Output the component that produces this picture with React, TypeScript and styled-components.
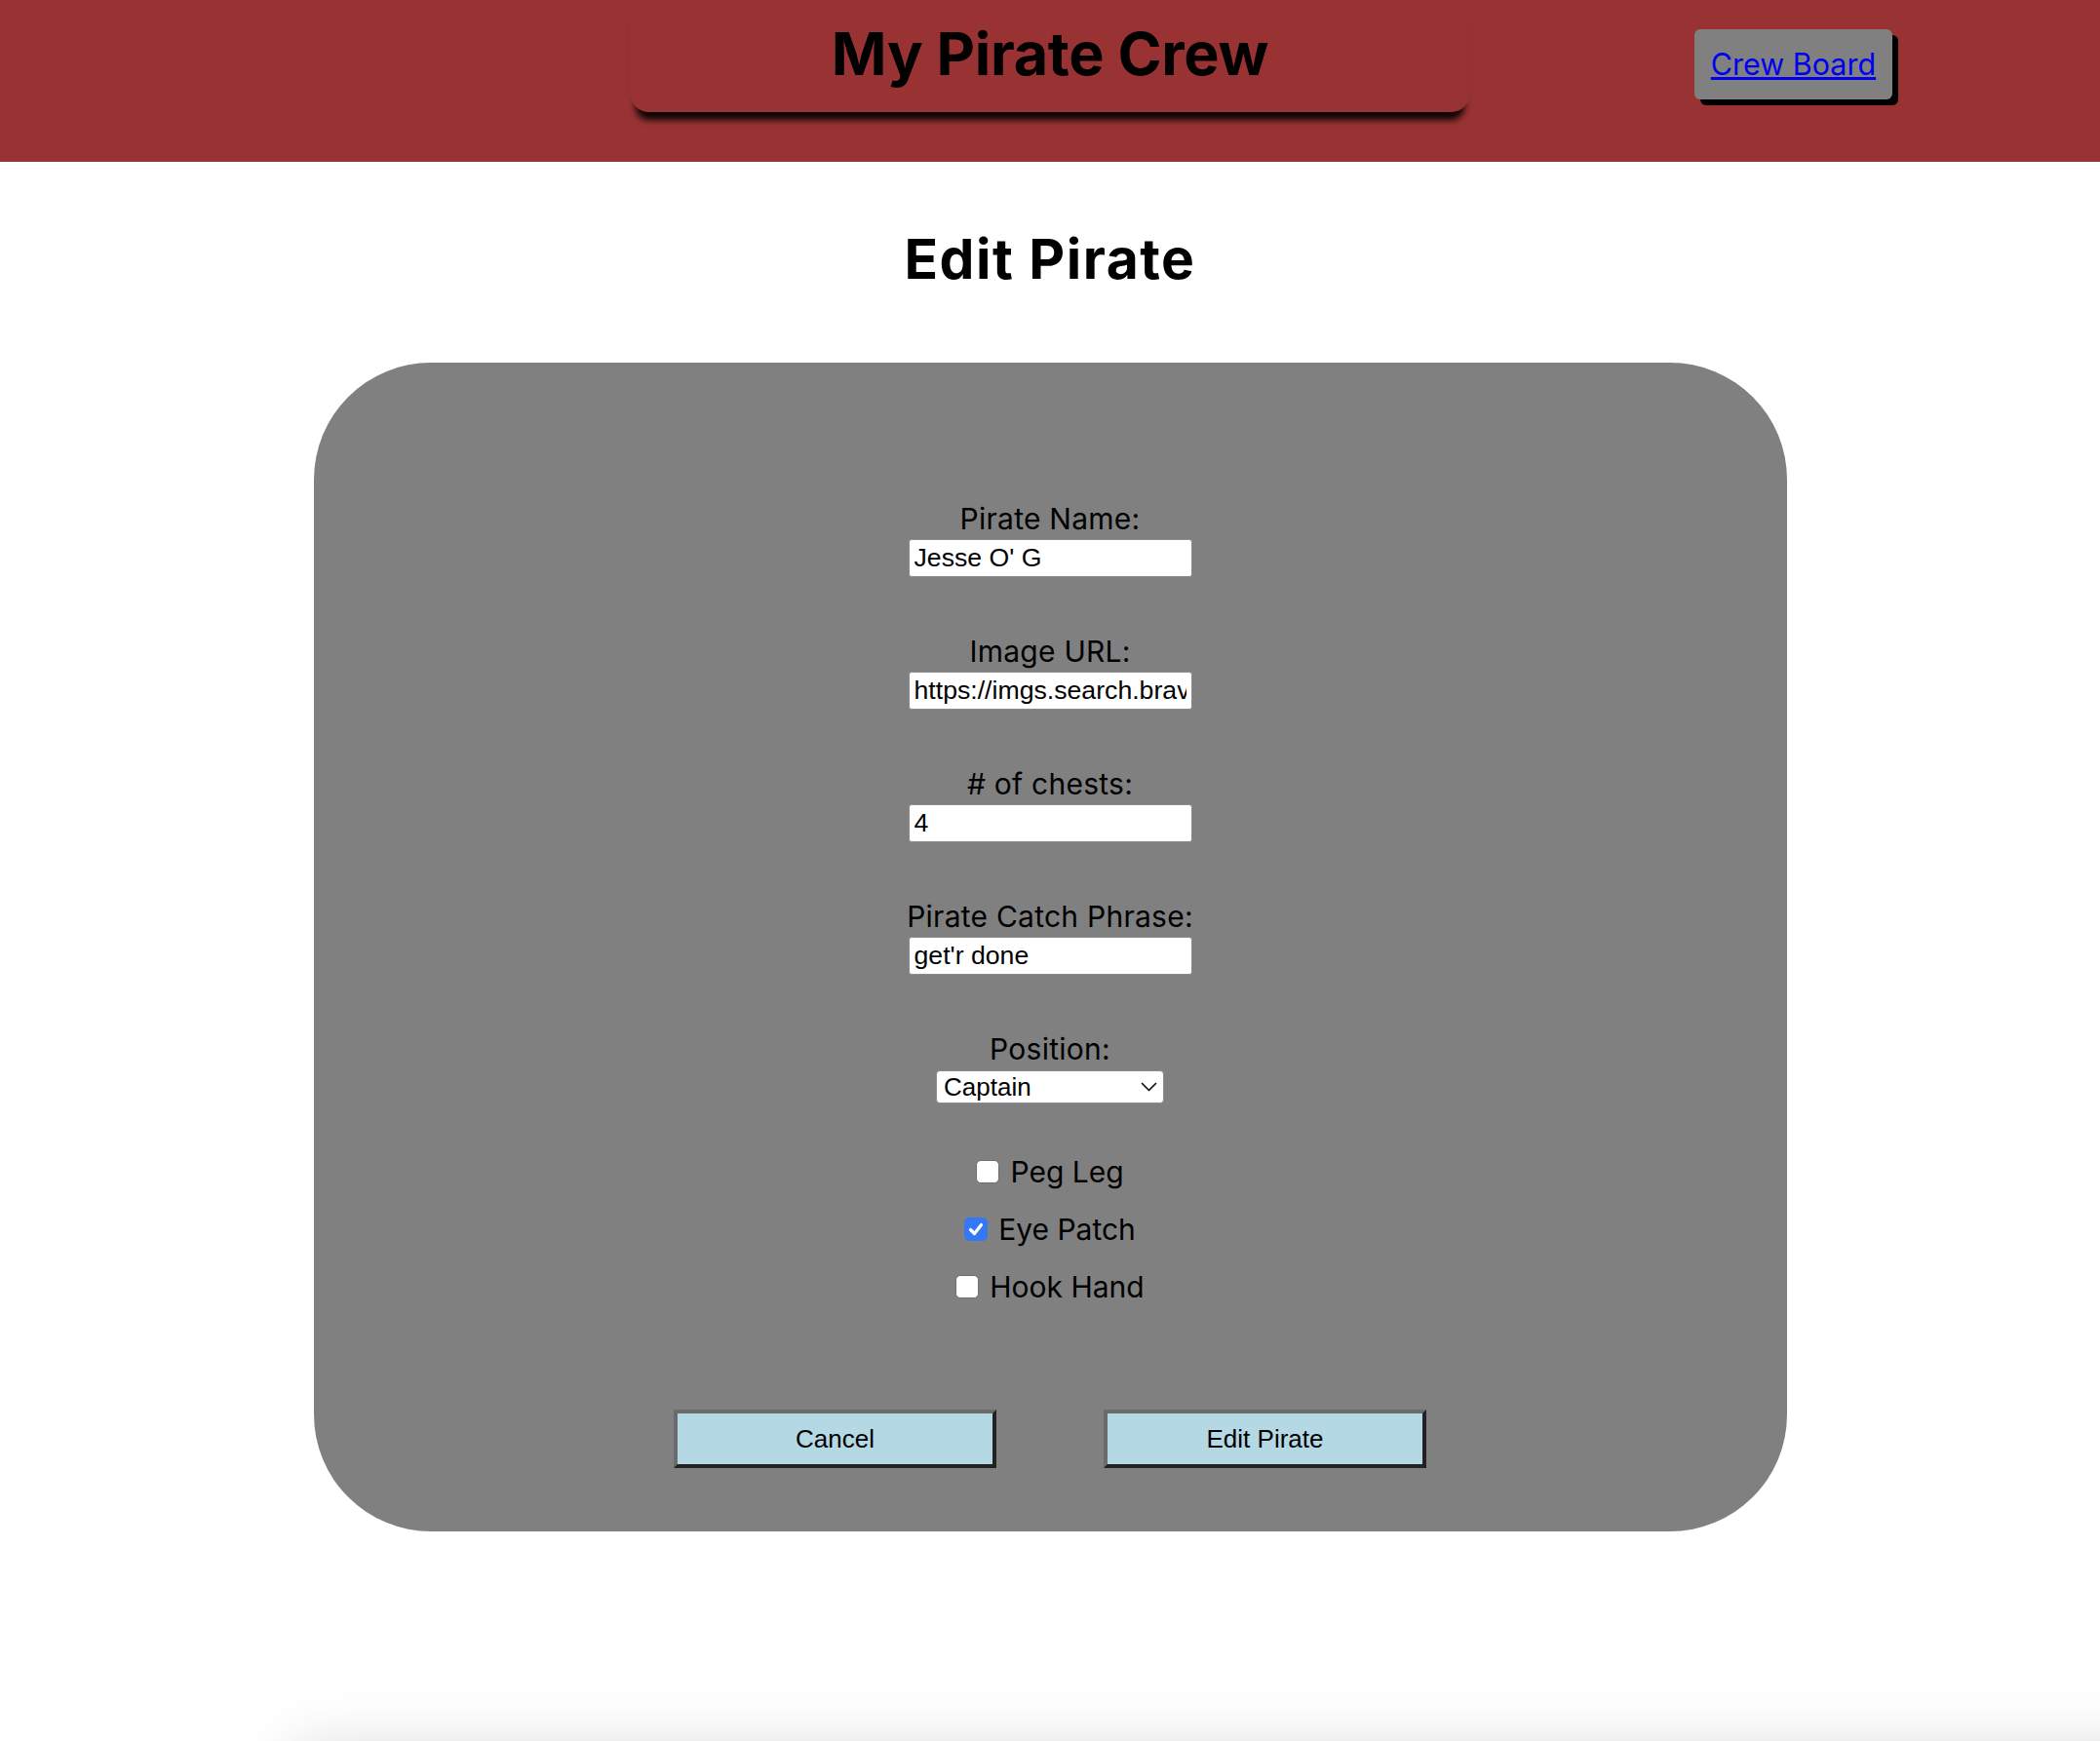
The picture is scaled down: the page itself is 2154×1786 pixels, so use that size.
import React from "react";
import styled, { createGlobalStyle } from "styled-components";

const GlobalStyle = createGlobalStyle`
  html, body {
    margin: 0;
    padding: 0;
    overflow: hidden;
    background: #ffffff;
    font-family: Inter, "Noto Sans", sans-serif;
  }
`;

const Header = styled.header`
  height: 166px;
  background: #993333;
  display: grid;
  grid-template-columns: 1fr 40% 1fr;
  align-items: start;
`;

const TitleBox = styled.div`
  grid-column: 2;
  background: #993333;
  border-radius: 0 0 20px 20px;
  box-shadow: 0 14px 7px -6px rgba(0, 0, 0, 0.95);
  padding: 18px 0 22px;
  text-align: center;
`;

const Title = styled.h1`
  margin: 0;
  font-family: Inter, sans-serif;
  font-weight: 700;
  font-size: 61px;
  line-height: 75px;
  letter-spacing: -0.3px;
  color: #000;
`;

const NavCell = styled.div`
  grid-column: 3;
  padding: 30px 0 0 230px;
`;

const NavButton = styled.div`
  display: inline-block;
  background: #808080;
  border-radius: 6px;
  box-shadow: 6px 6px 0 #000;
  padding: 16px 17px;
  font-size: 30.5px;
  line-height: 40px;
`;

const NavLink = styled.a`
  color: #0000ee;
  text-decoration: underline;
`;

const Main = styled.main`
  display: flex;
  flex-direction: column;
  align-items: center;
`;

const PageTitle = styled.h2`
  margin: 68px 0 75px;
  font-weight: 700;
  font-size: 57px;
  line-height: 63px;
  letter-spacing: 1.5px;
  color: #000;
`;

const Card = styled.form`
  width: 1511px;
  box-sizing: border-box;
  background: #808080;
  border-radius: 120px;
  padding: 143px 0 65px;
  display: flex;
  flex-direction: column;
  align-items: center;
`;

const Fields = styled.div`
  display: flex;
  flex-direction: column;
  align-items: center;
  gap: 59px;
`;

const Field = styled.div<{ $gap?: number }>`
  display: flex;
  flex-direction: column;
  align-items: center;
  gap: ${(p) => p.$gap ?? 4}px;
`;

const Label = styled.label`
  font-size: 30px;
  line-height: 34px;
  letter-spacing: 0.25px;
  color: #000;
`;

const TextInput = styled.input`
  width: 291px;
  height: 39px;
  box-sizing: border-box;
  margin: 0;
  padding: 0 5px;
  border: 1px solid #8c8c8c;
  border-radius: 3px;
  background: #fff;
  font-family: "Liberation Sans", Arial, sans-serif;
  font-size: 26.67px;
  color: #000;
  outline: none;
`;

const SelectWrap = styled.div`
  position: relative;
  width: 234px;
  height: 34px;
`;

const Select = styled.select`
  appearance: none;
  width: 100%;
  height: 100%;
  box-sizing: border-box;
  margin: 0;
  padding: 0 30px 0 7px;
  border: 1px solid #8c8c8c;
  border-radius: 4px;
  background: #fff;
  font-family: "Liberation Sans", Arial, sans-serif;
  font-size: 26px;
  color: #000;
  outline: none;
`;

const Chevron = styled.svg`
  position: absolute;
  right: 7px;
  top: 50%;
  transform: translateY(-50%);
  pointer-events: none;
`;

const CheckGroup = styled.div`
  margin-top: 52px;
  display: flex;
  flex-direction: column;
  align-items: center;
  gap: 23px;
`;

const CheckRow = styled.label`
  display: flex;
  align-items: center;
  gap: 11px;
  font-size: 30px;
  line-height: 36px;
  color: #000;
`;

const BoxWrap = styled.span`
  position: relative;
  display: inline-flex;
  width: 24px;
  height: 24px;
`;

const Checkbox = styled.input`
  appearance: none;
  width: 24px;
  height: 24px;
  margin: 0;
  box-sizing: border-box;
  border: 1.5px solid #6f6f6f;
  border-radius: 5px;
  background: #fff;

  &:checked {
    background: #3478f6;
    border-color: #3478f6;
  }
`;

const CheckMark = styled.svg`
  position: absolute;
  left: 3px;
  top: 3px;
  pointer-events: none;
`;

const ButtonRow = styled.div`
  margin-top: 108px;
  display: flex;
  gap: 110px;
`;

const ActionButton = styled.button`
  width: 331px;
  height: 60px;
  box-sizing: border-box;
  background: #b4d8e4;
  border-width: 4px;
  border-style: solid;
  border-color: #6b6b6b #222 #222 #6b6b6b;
  font-family: "Liberation Sans", Arial, sans-serif;
  font-size: 26px;
  color: #000;
  cursor: pointer;
`;

const FooterShade = styled.div`
  margin: 223px -300px 0 300px;
  height: 200px;
  background: #fff;
  box-shadow: 0 0 60px rgba(0, 0, 0, 0.15);
`;

function Check({ label, checked }: { label: string; checked?: boolean }) {
  return (
    <CheckRow>
      <BoxWrap>
        <Checkbox type="checkbox" defaultChecked={checked} />
        {checked && (
          <CheckMark width="18" height="18" viewBox="0 0 18 18" fill="none">
            <path
              d="M3.5 9.5 L7.5 13.5 L14.5 4.5"
              stroke="#fff"
              strokeWidth="3.2"
              strokeLinecap="round"
              strokeLinejoin="round"
            />
          </CheckMark>
        )}
      </BoxWrap>
      {label}
    </CheckRow>
  );
}

export default function App() {
  return (
    <>
      <GlobalStyle />
      <Header>
        <TitleBox>
          <Title>My Pirate Crew</Title>
        </TitleBox>
        <NavCell>
          <NavButton>
            <NavLink href="#">Crew Board</NavLink>
          </NavButton>
        </NavCell>
      </Header>
      <Main>
        <PageTitle>Edit Pirate</PageTitle>
        <Card onSubmit={(e) => e.preventDefault()}>
          <Fields>
            <Field>
              <Label htmlFor="name">Pirate Name:</Label>
              <TextInput id="name" type="text" defaultValue="Jesse O' G" />
            </Field>
            <Field>
              <Label htmlFor="img">Image URL:</Label>
              <TextInput
                id="img"
                type="text"
                defaultValue="https://imgs.search.brave.com/pirate.jpg"
              />
            </Field>
            <Field>
              <Label htmlFor="chests"># of chests:</Label>
              <TextInput id="chests" type="text" defaultValue="4" />
            </Field>
            <Field>
              <Label htmlFor="phrase">Pirate Catch Phrase:</Label>
              <TextInput id="phrase" type="text" defaultValue="get'r done" />
            </Field>
            <Field $gap={5}>
              <Label htmlFor="position">Position:</Label>
              <SelectWrap>
                <Select id="position" defaultValue="Captain">
                  <option>Captain</option>
                  <option>First Mate</option>
                  <option>Boatswain</option>
                  <option>Deckhand</option>
                </Select>
                <Chevron width="17" height="10" viewBox="0 0 17 10" fill="none">
                  <path
                    d="M1.5 1.5 L8.5 8.5 L15.5 1.5"
                    stroke="#111"
                    strokeWidth="1.7"
                    strokeLinecap="round"
                    strokeLinejoin="round"
                  />
                </Chevron>
              </SelectWrap>
            </Field>
          </Fields>
          <CheckGroup>
            <Check label="Peg Leg" />
            <Check label="Eye Patch" checked />
            <Check label="Hook Hand" />
          </CheckGroup>
          <ButtonRow>
            <ActionButton type="button">Cancel</ActionButton>
            <ActionButton type="submit">Edit Pirate</ActionButton>
          </ButtonRow>
        </Card>
      </Main>
      <FooterShade />
    </>
  );
}
